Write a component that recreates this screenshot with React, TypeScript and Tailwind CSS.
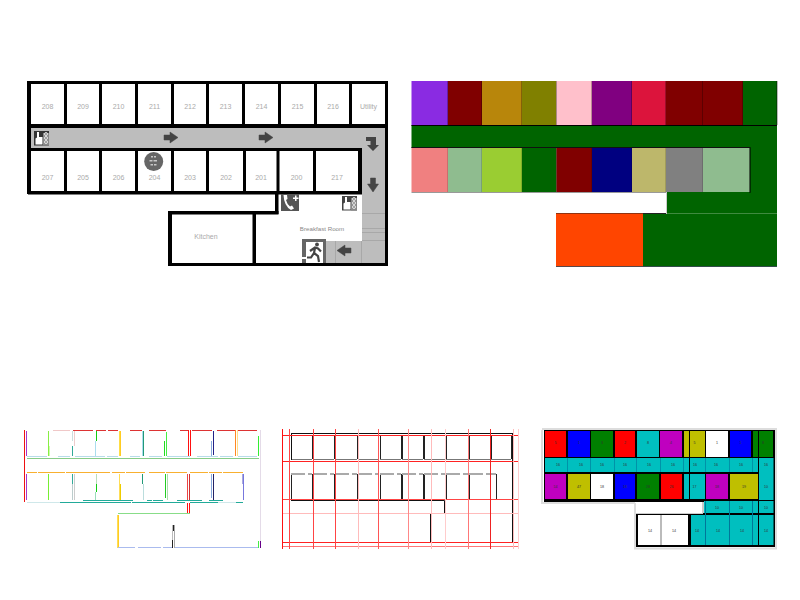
// [x, y, w, h, colour]
type R = [number, number, number, number, string];
type Cell = [number, number, string, string];

const roomsTop = [
  [31, 64, "208"], [67, 99, "209"], [102, 135, "210"], [138, 171, "211"], [174, 206, "212"],
  [209, 242, "213"], [245, 278, "214"], [281, 314, "215"], [317, 349, "216"], [352, 385, "Utility"],
] as const;
const roomsBottom = [
  [31, 64, "207"], [67, 99, "205"], [102, 135, "206"], [138, 171, "204"], [174, 206, "203"],
  [209, 243, "202"], [246, 276, "201"], [280, 313, "200"], [316, 358, "217"],
] as const;

function Arrow({ x, y, rot = 0 }: { x: number; y: number; rot?: number }) {
  return (
    <path
      transform={`translate(${x} ${y}) rotate(${rot})`}
      d="M-7 -2.5 H-1 V-5.5 L7 0 L-1 5.5 V2.5 H-7 Z"
      fill="#444"
      stroke="#444"
      strokeWidth="0.5"
      strokeLinejoin="round"
    />
  );
}

function HandSign({ x, y, dark }: { x: number; y: number; dark: string }) {
  return (
    <g transform={`translate(${x} ${y})`}>
      <rect width="15" height="14.5" fill={dark} />
      <rect x="9" y="2" width="6" height="12.5" fill="#888" />
      <path d="M3 1 h2 v5 h3.5 v7.5 h-7 v-6 l1.5 -1 Z" fill="#fff" />
      {[3, 7, 11].map((d) => (
        <circle key={d} cx="12" cy={d} r="1.5" fill="none" stroke="#eee" strokeWidth="0.9" />
      ))}
    </g>
  );
}

function FloorPlan() {
  const walls: R[] = [
    [27, 81, 361, 3, "#000"], [27, 124, 361, 4, "#000"], [27, 81, 4, 113, "#000"], [385, 81, 3, 185, "#000"],
    [31, 148, 331, 3, "#000"], [28, 191, 334, 3.5, "#000"], [358, 148, 4, 46, "#000"],
    [275, 194, 3.5, 20, "#000"], [168, 211, 110.5, 3.5, "#000"], [168, 211, 4, 55, "#000"],
    [252.5, 214, 3.5, 50, "#000"], [168, 263, 220, 3, "#000"],
  ];
  [64, 99, 135, 171, 206, 242, 278, 314, 349].forEach((x) => walls.push([x, 84, 3, 40, "#000"]));
  [64, 99, 135, 171, 206, 243, 276.5, 313].forEach((x) => walls.push([x, 151, 3, 40, "#000"]));

  return (
    <g fontFamily="'Liberation Sans', sans-serif" fontSize="7" fill="#aaa" textAnchor="middle">
      <rect x="31" y="128" width="354" height="20" fill="#bdbdbd" />
      <rect x="362" y="148" width="23" height="115" fill="#bdbdbd" />
      <rect x="325" y="241" width="37" height="22" fill="#bdbdbd" />
      {[213, 228, 232, 240].map((y) => (
        <rect key={y} x="362" y={y} width="23" height="1" fill="#a8a8a8" />
      ))}
      {[335, 361].map((x) => (
        <rect key={x} x={x} y="241" width="1" height="22" fill="#a8a8a8" />
      ))}
      {walls.map(([x, y, w, h, c], i) => (
        <rect key={i} x={x} y={y} width={w} height={h} fill={c} />
      ))}
      <g opacity="0.99">
        {roomsTop.map(([a, b, t]) => (
          <text key={t} x={(a + b) / 2} y="108.5">{t}</text>
        ))}
        {roomsBottom.map(([a, b, t]) => (
          <text key={t} x={(a + b) / 2} y="179.5">{t}</text>
        ))}
        <text x="206" y="239">Kitchen</text>
        <text x="322" y="230.5" fontSize="6.2" fill="#888">Breakfast Room</text>
      </g>

      <HandSign x={34} y={131} dark="#333" />

      <Arrow x={171} y={137.5} />
      <Arrow x={266} y={137.5} />
      <Arrow x={373} y={185} rot={90} />
      <path d="M366 137 H376 V145 H379 L373 151 L367 145 H370.5 V141 H366 Z" fill="#444" />
      <Arrow x={344} y={250.5} rot={180} />

      <circle cx="153.7" cy="161.5" r="9.5" fill="#666" />
      <g fill="#c8c8c8">
        <rect x="151" y="156" width="2" height="1.5" />
        <rect x="154" y="156" width="2" height="1.5" />
        <rect x="149.5" y="160" width="3" height="1.5" />
        <rect x="153.5" y="160" width="3.5" height="1.5" />
        <rect x="150.5" y="164" width="2.5" height="1.5" />
        <rect x="154" y="164" width="2.5" height="1.5" />
      </g>

      {/* phone */}
      <rect x="281" y="194" width="18" height="17" fill="#555" />
      <path d="M283.5 195 L287 195 L287.5 199 L286 200 Q287 204 290 206.5 L292 205.5 L294 208.5 L291 210 Q284 206 283.5 195 Z" fill="#fff" />
      <path d="M293 197.5 h2 v-2 h1.5 v2 h2 v1.5 h-2 v2 h-1.5 v-2 h-2 Z" fill="#fff" />

      <HandSign x={342} y={196} dark="#444" />

      {/* exit */}
      <rect x="302" y="239" width="24" height="24" fill="#666" />
      <rect x="306" y="242" width="17" height="21" fill="#fff" />
      <rect x="302" y="257" width="6" height="2" fill="#fff" />
      <circle cx="317" cy="244.5" r="1.9" fill="#444" />
      <path d="M310 251 L315 247.5 L318 248.5 L321 251.5 M315 248 L314 253 L318 256 L319 262 M314 253 L311 257.5 L307 257.5" fill="none" stroke="#444" strokeWidth="2.2" />
    </g>
  );
}

const colourTop: [number, number, string][] = [
  [411.5, 448, "#8A2BE2"], [448, 482, "#800000"], [482, 522, "#B8860B"], [522, 556.5, "#808000"],
  [556.5, 592, "#FFC0CB"], [592, 632, "#800080"], [632, 666, "#DC143C"], [666, 703, "#800000"],
  [703, 743, "#800000"], [743, 777, "#006400"],
];
const colourBottom: [number, number, string][] = [
  [411.5, 448, "#F08080"], [448, 482, "#8FBC8F"], [482, 522, "#9ACD32"], [522, 556.5, "#006400"],
  [556.5, 592, "#800000"], [592, 632, "#000080"], [632, 666, "#BDB76B"], [666, 703, "#808080"],
  [703, 750, "#8FBC8F"],
];

function ColourMap() {
  return (
    <g>
      <rect x="411.5" y="125" width="365.5" height="23" fill="#006400" />
      <rect x="750" y="148" width="27" height="44" fill="#006400" />
      <rect x="666" y="192" width="111" height="21.5" fill="#006400" />
      <rect x="643" y="213.5" width="134" height="53" fill="#006400" />
      {colourTop.map(([a, b, c]) => (
        <g key={a}>
          <rect x={a} y="81" width={b - a} height="44" fill={c} />
          <rect x={b - 0.5} y="81" width="1" height="44" fill="#000" opacity="0.55" />
        </g>
      ))}
      {colourBottom.map(([a, b, c]) => (
        <g key={a}>
          <rect x={a} y="148" width={b - a} height="44" fill={c} />
          <rect x={b - 0.5} y="148" width="1" height="44" fill="#000" opacity="0.3" />
        </g>
      ))}
      <rect x="749.5" y="147" width="1" height="46" fill="#000" opacity="0.9" />
      <rect x="411.5" y="125" width="365.5" height="1" fill="#000" />
      <rect x="411.5" y="147" width="338.5" height="1" fill="#111" />
      <rect x="411.5" y="192" width="254.5" height="1" fill="#999" />
      <rect x="666" y="192" width="1" height="22" fill="#ccc" />
      <rect x="556" y="213" width="110" height="1" fill="#222" />
      <rect x="556" y="213.5" width="87" height="53" fill="#FF4500" />
      <rect x="556" y="266" width="221" height="1" fill="#123" opacity="0.7" />
    </g>
  );
}

const hDash = (y: number, c: string, spans: [number, number][]): R[] =>
  spans.map(([a, b]) => [a, y, b - a, 1, c]);

const edges: R[] = [
  [24, 430, 1, 72, "#e11"], [26, 431, 1, 25, "#a3c"], [26, 474, 1, 26, "#a3c"],
  [48, 431, 1, 25, "#8e4"], [49, 446, 1, 10, "#cfa"],
  [72, 431, 1, 10, "#cdd"], [72, 446, 1, 10, "#3a9"], [74, 431, 1, 15, "#ecc"],
  [96, 431, 1, 10, "#1c1"], [95, 441, 1, 15, "#ade"],
  [119, 431, 1, 25, "#fd4"], [120, 431, 1, 25, "#fc2"], [142, 431, 1, 25, "#ade"], [143, 431, 1, 25, "#297"],
  [164, 441, 1, 15, "#2d2"], [166, 432, 1, 24, "#4e4"],
  [188, 430, 1, 26, "#f11"], [190, 430, 1, 26, "#f11"], [211, 441, 1, 15, "#8ad"], [213, 431, 1, 24, "#228"],
  [235, 430, 1, 26, "#f82"], [237, 430, 1, 26, "#fd8"], [258, 436, 1, 20, "#3e3"],

  [48, 474, 1, 26, "#7e3"], [72, 474, 1, 10, "#3a9"], [72, 484, 1, 16, "#bcc"], [74, 474, 1, 26, "#ccc"],
  [96, 474, 1, 10, "#bdb"], [96, 484, 1, 8, "#1c1"], [95, 492, 1, 8, "#9db"],
  [119, 474, 1, 26, "#fd5"], [120, 484, 1, 16, "#ec0"], [142, 474, 1, 10, "#297"], [143, 484, 1, 16, "#bdd"],
  [165, 474, 1, 24, "#2c2"], [167, 474, 1, 26, "#ada"],
  [187, 474, 1, 26, "#e44"], [189, 474, 1, 26, "#c33"], [211, 474, 1, 24, "#8ad"], [213, 474, 1, 26, "#226"],
  [242, 474, 1, 10, "#aad"], [243, 474, 1, 26, "#77d"],

  [260, 430, 1, 117, "#e4dbe8"], [258, 541, 1, 7, "#4e4"], [260, 541, 1, 7, "#608"],
  [187, 503, 1, 11, "#f11"], [189, 503, 1, 11, "#f11"], [117, 515, 1, 33, "#fd5"], [118, 515, 1, 33, "#fc2"],
  [172, 525, 1, 23, "#bbb"], [174, 525, 1, 23, "#aaa"], [172, 540, 1, 8, "#222"], [173, 525, 1, 6, "#222"],

  ...hDash(430, "#d33", [[73, 93], [96, 106], [108, 118], [130, 142], [149, 166], [180, 188], [192, 212], [217, 235], [238, 257]]),
  ...hDash(430, "#f0c8c8", [[53, 70]]),
  ...hDash(456, "#b8dcea", [[27, 47], [58, 70], [75, 105], [107, 118], [130, 140], [149, 162], [167, 190], [197, 218], [220, 233], [238, 257]]),
  [27, 458, 232, 1, "#8c8"],
  ...hDash(472, "#f8b030", [[27, 37], [38, 65], [66, 90], [90, 110], [112, 125], [126, 145], [149, 165], [166, 187], [190, 208], [209, 222], [223, 243]]),
  ...hDash(500, "#2a9", [[83, 133], [147, 152], [153, 163], [177, 202], [209, 223]]),
  ...hDash(502, "#2a9", [[60, 131], [132, 185], [190, 218], [236, 243]]),
  ...hDash(502, "#cfe8ea", [[27, 60], [218, 236]]),
  [118, 513, 72, 1, "#8d8"],
  ...hDash(547, "#abe", [[118, 135], [138, 161], [163, 172], [175, 258]]),
];

const ruleH = [
  [435, "#f22"], [461, "#f22"], [499, "#f44"], [513, "#fbb"], [542, "#f22"], [546, "#f77"],
] as const;
const ruleV = [
  [282, "#f11"], [289, "#f44"], [313, "#f44"], [335, "#f44"], [358, "#fbb"], [378, "#f55"], [408, "#f88"],
  [431, "#fbb"], [445, "#fcc"], [468, "#f77"], [490, "#e22"], [513, "#fbb"], [518, "#fcc"],
] as const;
const cellsX: [number, number][] = [
  [291, 312], [313, 334], [335, 357], [358, 378], [380, 401], [402, 423], [424, 445], [446, 468], [469, 490], [491, 511],
];

function Outlines() {
  return (
    <g>
      {cellsX.map(([a, b]) => (
        <g key={a}>
          <path d={`M${a + 0.5} 435 V459 M${b + 0.5} 435 V459`} fill="none" stroke="#222" />
          <path d={`M${a} 459.5 H${b}`} fill="none" stroke="#777" />
        </g>
      ))}
      {cellsX.slice(0, 9).map(([a, b]) => (
        <g key={a}>
          <path d={`M${a + 0.5} 474 V500 M${(b === 490 ? 496 : b) + 0.5} 474 V500`} fill="none" stroke="#222" />
          <path d={`M${a} 474 H${b === 490 ? 496 : b}`} fill="none" stroke="#aaa" strokeWidth="2" strokeDasharray="14 3" />
        </g>
      ))}
      <path
        d="M291 433.5 H513 M512.5 433 V543 M291.5 433 V460 M291 500.5 H444.5 V513.5 H378.5 V542.5 H512.5 M430.5 513 V542"
        fill="none"
        stroke="#111"
      />
      {ruleH.map(([y, c]) => (
        <rect key={y} x="282" y={y} width="236" height="1" fill={c} />
      ))}
      {ruleV.map(([x, c]) => (
        <rect key={x} x={x} y="429" width="1" height="120" fill={c} />
      ))}
    </g>
  );
}

const T = "#00BFBF";
const Re = "#FF0000";
const B = "#0000FF";
const G = "#008000";
const M = "#BF00BF";
const Y = "#BFBF00";
const Wh = "#FFFFFF";

const gridTop: Cell[] = [
  [545, 566, Re, "5"], [568, 590, B, "1"], [591, 613, G, "3"], [615, 635, Re, "2"], [637, 659, T, "8"],
  [660, 682, M, "4"], [684, 705, Y, "5"], [706, 728, Wh, "1"], [730, 751, B, "1"], [753, 773, G, "8"],
];
const gridMid: Cell[] = [
  [545, 566, M, "14"], [568, 590, Y, "47"], [591, 613, Wh, "18"], [615, 635, B, "18"], [637, 659, G, "28"],
  [661, 682, Re, "26"], [684, 705, T, "17"], [706, 728, M, "18"], [730, 758, Y, "19"],
];
const gridRow = [558, 581, 602, 625, 649, 673, 695, 716, 741, 766];
const lowerRow = [650, 674, 697, 718, 742, 766];

function ColourGrid() {
  return (
    <g fontFamily="'Liberation Sans', sans-serif" fontSize="3.6" fill="#333" textAnchor="middle">
      <path d="M542 430 V503 H635 M635 503 V548.5 H776 V429 H542" fill="none" stroke="#ddd" strokeWidth="2" />
      <rect x="544" y="430" width="231" height="72" fill="#000" />
      <rect x="703" y="500" width="72" height="47" fill="#000" />
      <rect x="636" y="514" width="139" height="33" fill="#000" />
      <rect x="636" y="502" width="67" height="11" fill="#fff" />
      <rect x="636" y="513" width="67" height="1" fill="#ccc" />
      <rect x="702" y="502" width="2" height="11" fill="#ccc" />
      <rect x="545" y="458" width="228.5" height="14" fill={T} />
      {[567, 590, 614, 636, 660, 683, 689, 705, 729, 752, 758].map((x) => (
        <rect key={x} x={x} y="458" width="1" height="14" fill="#079" opacity="0.6" />
      ))}
      {gridRow.map((x) => (
        <text key={x} x={x} y="466">16</text>
      ))}
      {gridTop.map(([a, b, c, t]) => (
        <g key={a}>
          <rect x={a} y="431" width={b - a} height="26" fill={c} />
          <text x={(a + b) / 2} y="444">{t}</text>
        </g>
      ))}
      {gridMid.map(([a, b, c, t]) => (
        <g key={a}>
          <rect x={a} y="474" width={b - a} height="25" fill={c} />
          <text x={(a + b) / 2} y="488">{t}</text>
        </g>
      ))}
      <rect x="759" y="472" width="14.5" height="28" fill={T} />
      <text x="766" y="488">10</text>
      <rect x="704" y="501" width="69.5" height="12" fill={T} />
      <rect x="638" y="515" width="50" height="30" fill={Wh} />
      <rect x="691" y="515" width="82.5" height="30" fill={T} />
      <rect x="660" y="515" width="2" height="30" fill="#bbb" />
      {[705, 729, 752].map((x) => (
        <rect key={x} x={x} y="501" width="1" height="44" fill="#079" />
      ))}
      {lowerRow.map((x) => (
        <text key={x} x={x} y="532">14</text>
      ))}
      {[717, 741, 766].map((x) => (
        <text key={x} x={x} y="509">10</text>
      ))}
      <rect x="758" y="431" width="1" height="114" fill="#000" />
      <rect x="689" y="431" width="1" height="68" fill="#000" />
    </g>
  );
}

export default function App() {
  return (
    <div className="w-[800px] h-[600px] bg-white overflow-hidden">
      <svg width="800" height="600" viewBox="0 0 800 600" className="block">
        <FloorPlan />
        <ColourMap />
        {edges.map(([x, y, w, h, c], i) => (
          <rect key={i} x={x} y={y} width={w} height={h} fill={c} />
        ))}
        <Outlines />
        <ColourGrid />
      </svg>
    </div>
  );
}
